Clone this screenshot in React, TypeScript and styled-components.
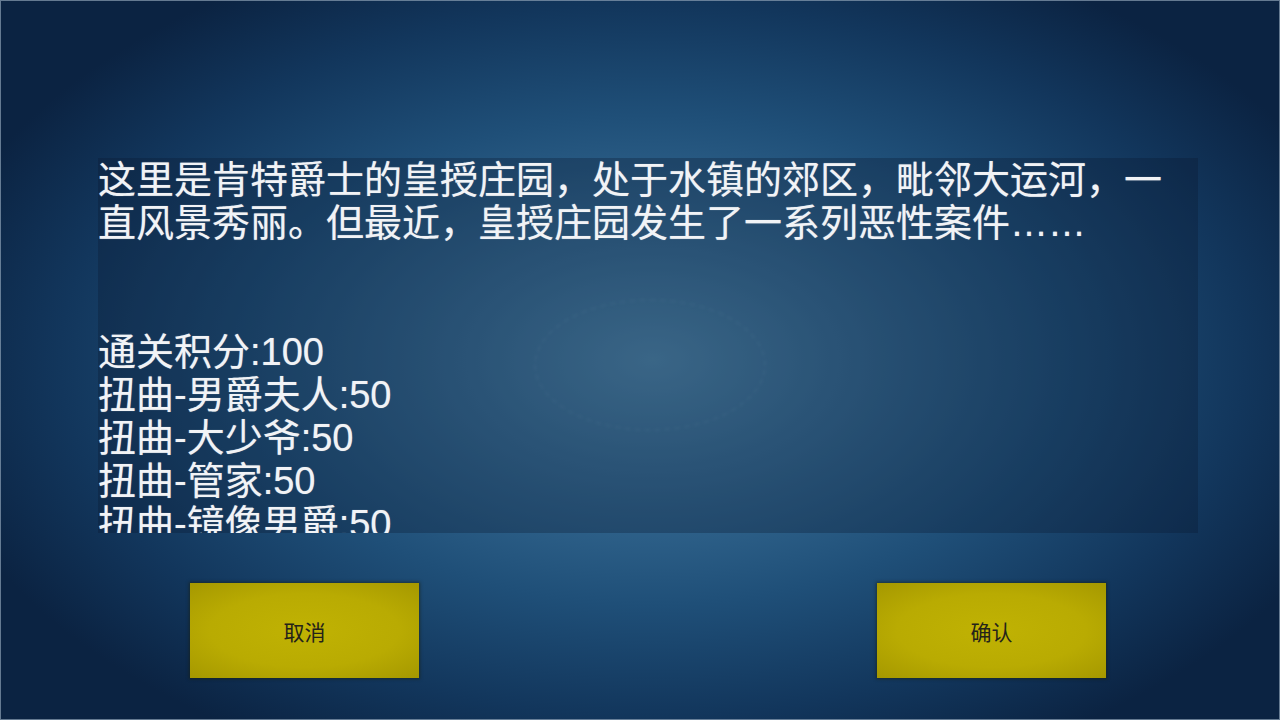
import React from 'react';
import styled, { createGlobalStyle } from 'styled-components';

const GlobalStyle = createGlobalStyle`
  html, body {
    margin: 0;
    padding: 0;
    background: #0b2240;
  }
  * {
    box-sizing: border-box;
  }
`;

const rewards: Array<string> = [
  '通关积分:100',
  '扭曲-男爵夫人:50',
  '扭曲-大少爷:50',
  '扭曲-管家:50',
  '扭曲-镜像男爵:50',
];

export default function App() {
  return (
    <>
      <GlobalStyle />
      <Screen>
        <Halo />
        <Dialog>
          <InfoPanel>
            <Story>
              这里是肯特爵士的皇授庄园，处于水镇的郊区，毗邻大运河，一直风景秀丽。但最近，皇授庄园发生了一系列恶性案件……
            </Story>
            <Spacer />
            <Spacer />
            {rewards.map((item) => (
              <Line key={item}>{item}</Line>
            ))}
          </InfoPanel>
          <ButtonRow>
            <ActionButton>取消</ActionButton>
            <ActionButton>确认</ActionButton>
          </ButtonRow>
        </Dialog>
      </Screen>
    </>
  );
}

const Screen = styled.div`
  position: relative;
  width: 1280px;
  height: 720px;
  overflow: hidden;
  border: 1px solid rgba(140, 160, 180, 0.7);
  background: radial-gradient(
    ellipse 58% 62% at 51% 50%,
    #4f88ad 0%,
    #386d95 25%,
    #1f4f78 55%,
    #12365c 80%,
    #0b2342 100%
  );
  font-family: 'Liberation Sans', 'Noto Sans CJK SC', sans-serif;
`;

// faint chalk ring behind the panel
const Halo = styled.div`
  position: absolute;
  left: 533px;
  top: 298px;
  width: 232px;
  height: 132px;
  border-radius: 50%;
  border: 2px dashed rgba(170, 205, 230, 0.1);
  filter: blur(1.5px);
`;

const Dialog = styled.div`
  position: relative;
  display: flex;
  flex-direction: column;
  gap: 50px;
  padding: 157px 0 0 97px;
`;

const InfoPanel = styled.div`
  width: 1100px;
  height: 375px;
  overflow: hidden;
  padding-top: 1px;
  background: rgba(10, 24, 46, 0.3);
  color: #f1f3f6;
  font-size: 38px;
  line-height: 43px;
  text-shadow: 0 0 1px rgba(255, 255, 255, 0.5);
`;

const Story = styled.p`
  margin: 0;
`;

const Spacer = styled.div`
  height: 43px;
`;

const Line = styled.div`
  white-space: nowrap;
`;

const ButtonRow = styled.div`
  width: 1100px;
  display: flex;
  justify-content: space-between;
  padding: 0 92px;
`;

const ActionButton = styled.div`
  width: 229px;
  height: 95px;
  display: flex;
  align-items: center;
  justify-content: center;
  background: radial-gradient(
    ellipse 75% 70% at 50% 50%,
    #c0b203 0%,
    #b9ab02 55%,
    #a49700 100%
  );
  box-shadow: 0 0 3px 1px rgba(30, 30, 0, 0.5);
  color: #24231a;
  font-size: 21px;
  font-family: 'Noto Sans CJK SC', sans-serif;
`;
